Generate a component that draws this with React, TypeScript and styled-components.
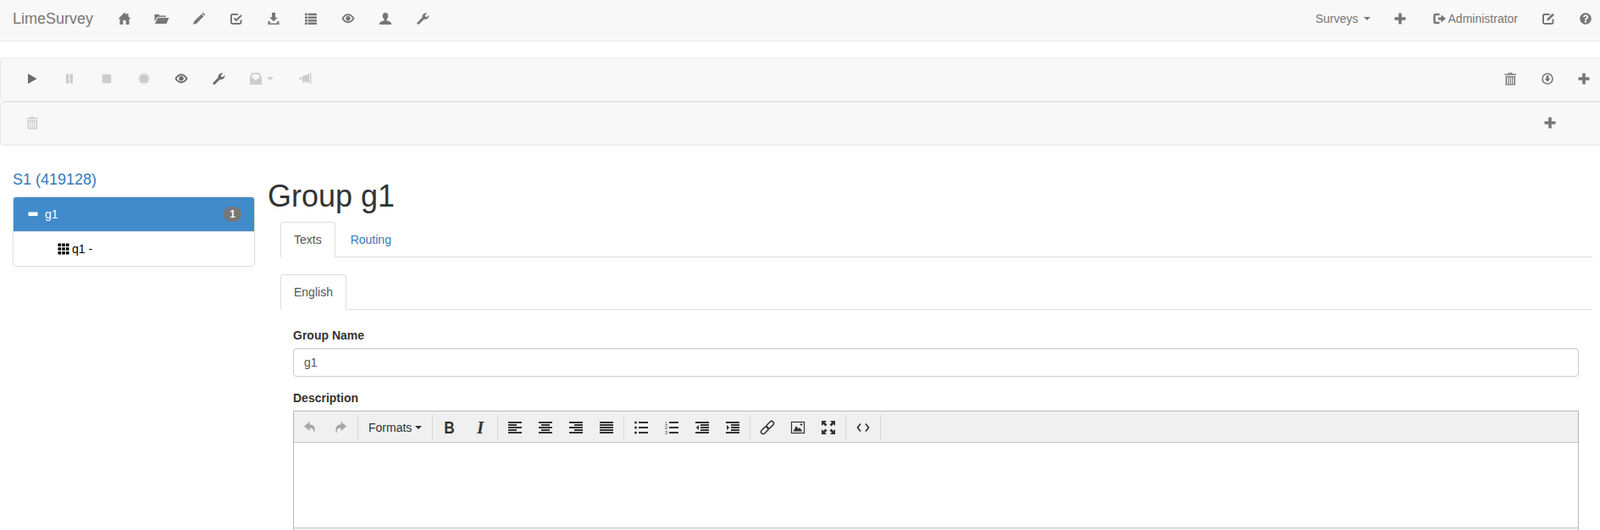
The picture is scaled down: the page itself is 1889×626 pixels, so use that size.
import type { ReactNode } from 'react';
import styled, { createGlobalStyle } from 'styled-components';
import { FaQuestionCircle } from 'react-icons/fa';

const GlobalStyle = createGlobalStyle`
  html, body {
    margin: 0;
    padding: 0;
    background: #fff;
    overflow: hidden;
  }
  body {
    font-family: "Liberation Sans", Arial, sans-serif;
    font-size: 14px;
    line-height: 20px;
    color: #333;
  }
  * {
    box-sizing: border-box;
  }
`;

const burstPoints = Array.from({ length: 20 }, (_, i) => {
  const r = i % 2 === 0 ? 7.4 : 4.8;
  const a = (i / 20) * Math.PI * 2;
  return `${(8 + r * Math.cos(a)).toFixed(2)},${(8 + r * Math.sin(a)).toFixed(2)}`;
}).join(' ');

const stroke = (width: number) => ({
  fill: 'none',
  stroke: 'currentColor',
  strokeWidth: width,
});

// Glyphs are drawn on a 16x16 grid, so one unit is one pixel on the page
const glyphs: Record<string, ReactNode> = {
  home: <path d="M8 .8l2.600 2.600V1.900h2v3.500l2.900 2.900h-2V15H9.700v-5H6.300v5H2.500V8.300h-2z" />,
  folder: <path d="M-.5 3h5l1 1.500h7.500V6H3L-.5 11.500zM3.500 7H16.500l-3 7H-.1z" />,
  pencil: <path d="M12.700.8l2.600 2.600-1.200 1.200-2.600-2.600zM10.800 2.700l2.600 2.600-8.300 8.400L1 15l1.300-4z" />,
  check: (
    <>
      <path d="M13.500 9.500v3A1.500 1.500 0 0 1 12 14H3.500A1.500 1.500 0 0 1 2 12.500v-8A1.500 1.500 0 0 1 3.500 3H10" {...stroke(2)} />
      <path d="M5.500 7.500L8 10l6-6" {...stroke(2.200)} />
    </>
  ),
  edit: (
    <>
      <path d="M13.500 8.500v4A1.500 1.500 0 0 1 12 14H3.500A1.500 1.500 0 0 1 2 12.500v-8A1.500 1.500 0 0 1 3.500 3H9.500" {...stroke(2)} />
      <path d="M6 10.500l.6-2.500 6.400-6.200 2 2-6.500 6.200z" />
    </>
  ),
  download: <path d="M6 1h4v5.500h3L8 11.300 3 6.500h3zM1.500 11h2.300v2.400h8.400V11h2.300v4h-13z" />,
  list: (
    <path d="M1 1.800h3v2.500H1zM4.700 1.800H15v2.500H4.700zM1 5.400h3v2.500H1zM4.700 5.400H15v2.500H4.700zM1 9h3v2.500H1zM4.700 9H15v2.500H4.700zM1 12.600h3v2.300H1zM4.700 12.600H15v2.300H4.700z" />
  ),
  eye: (
    <path
      fillRule="evenodd"
      d="M8 2.300c3.800 0 6.700 3.500 7.500 5.500-.8 2-3.700 5.400-7.500 5.400S1.300 9.800.5 7.800C1.300 5.800 4.200 2.300 8 2.300zM8 4.200c-2.400 0-4.600 1.900-5.400 3.600.8 1.700 3 3.500 5.400 3.500s4.600-1.800 5.400-3.500C12.600 6.100 10.400 4.200 8 4.200zM8 5a2.800 2.800 0 1 1-.01 0z"
    />
  ),
  user: (
    <path d="M8 1c2.200 0 3.300 1.700 3.300 3.800 0 1.800-.9 3.200-1.800 4v1.500c2.500.7 5 1.500 5.500 3V15H1v-1.700c.5-1.500 3-2.300 5.500-3V8.800c-.9-.8-1.800-2.200-1.800-4C4.700 2.700 5.800 1 8 1z" />
  ),
  wrench: (
    <path d="M1 13.200l6.600-6.600C7 4 9.500.8 13.500 1.300L10.800 4l.5 1.800 1.700.4 2.400-2.700c.5 4-2.900 6-5.600 5.300L3 15.300z" />
  ),
  play: <path d="M3 2l10.500 6L3 14z" />,
  pause: <path d="M4 2.500h3.400v11H4zM8.600 2.500H12v11H8.600z" />,
  stop: <path d="M2.800 2.700h10.400v10.500H2.800z" />,
  certificate: <polygon points={burstPoints} />,
  inbox: (
    <path
      fillRule="evenodd"
      d="M3.500 1h9L15 6.500V15H1V6.500zM4.500 2.800L3.200 7.500h2.600l1 2h2.400l1-2h2.600l-1.300-4.700z"
    />
  ),
  bullhorn: <path d="M5 5.200L13 2v11L5 10.300zM14 1h1.400v13H14zM1.500 6.500h2.700v2.600H1.500zM5 10.800h2.200l.6 2.200H5.800z" />,
  trash: (
    <path
      fillRule="evenodd"
      d="M6 .8h4l.5 1.500H15v1.500H1.500V2.300h4zM7 1.800l-.2.5h2.400l-.2-.5zM2.500 5H14v10.500H2.500zM4 6.300v7.900h1.300V6.300zM6.400 6.300v7.900h1.300V6.300zM8.800 6.300v7.900h1.300V6.300zM11.200 6.300v7.900h1.300V6.300z"
    />
  ),
  circleDown: (
    <>
      <circle cx="8" cy="8" r="6" {...stroke(1.600)} />
      <path d="M6.600 4.300h2.800v3.500h2L8 11.700 4.600 7.800h2z" />
    </>
  ),
  plus: <path d="M6.200 1.500h3.600v4.700h4.700v3.600H9.800v4.700H6.200V9.800H1.500V6.200h4.700z" />,
  logout: (
    <>
      <path d="M7.500 3H3A1.500 1.500 0 0 0 1.500 4.500v7A1.500 1.500 0 0 0 3 13h4.500" {...stroke(2.400)} />
      <path d="M6 6.500h3.500V3.500L15 8l-5.500 4.500v-3H6z" />
    </>
  ),
  minus: <path d="M2.500 5.500h11v4.500h-11z" />,
  th: (
    <path d="M1.500 1.500h3.600v3.600H1.500zM6.200 1.500h3.600v3.600H6.200zM10.900 1.500h3.600v3.600h-3.600zM1.500 6.200h3.600v3.600H1.500zM6.200 6.200h3.600v3.600H6.200zM10.900 6.200h3.600v3.600h-3.600zM1.500 10.900h3.600v3.600H1.500zM6.200 10.900h3.600v3.600H6.200zM10.900 10.900h3.600v3.600h-3.600z" />
  ),
  undo: <path d="M7.500 1L1 6.500 7.500 12V8.500c2.800 0 4.300 1 4.700 3.500l.3 3c2.300-5 1.500-10.500-5-10.500z" />,
  redo: <path d="M8.500 1L15 6.500 8.500 12V8.500c-2.800 0-4.300 1-4.700 3.500l-.3 3C1.200 10 2 4.500 8.500 4.500z" />,
  alignLeft: <path d="M0 1h16v2H0zM0 4h10v2H0zM0 7h16v2H0zM0 10h10v2H0zM0 13h16v2H0z" />,
  alignCenter: <path d="M0 1h16v2H0zM3 4h10v2H3zM0 7h16v2H0zM3 10h10v2H3zM0 13h16v2H0z" />,
  alignRight: <path d="M0 1h16v2H0zM6 4h10v2H6zM0 7h16v2H0zM6 10h10v2H6zM0 13h16v2H0z" />,
  alignJustify: <path d="M0 1h16v2H0zM0 4h16v2H0zM0 7h16v2H0zM0 10h16v2H0zM0 13h16v2H0z" />,
  bullist: (
    <>
      <circle cx="1.500" cy="2" r="1.500" />
      <circle cx="1.500" cy="8" r="1.500" />
      <circle cx="1.500" cy="14" r="1.500" />
      <path d="M5 1h11v2H5zM5 7h11v2H5zM5 13h11v2H5z" />
    </>
  ),
  numlist: (
    <>
      <text x="0" y="4.500" fontSize="5.500" fontFamily="Liberation Sans">1</text>
      <text x="0" y="10" fontSize="5.500" fontFamily="Liberation Sans">2</text>
      <text x="0" y="15.500" fontSize="5.500" fontFamily="Liberation Sans">3</text>
      <path d="M5 1h11v2H5zM5 7h11v2H5zM5 13h11v2H5z" />
    </>
  ),
  outdent: <path d="M0 1h16v2H0zM6 4h10v2H6zM6 7h10v2H6zM6 10h10v2H6zM0 13h16v2H0zM4 5v6L.8 8z" />,
  indent: <path d="M0 1h16v2H0zM6 4h10v2H6zM6 7h10v2H6zM6 10h10v2H6zM0 13h16v2H0zM1 5v6l3.200-3z" />,
  link: (
    <g transform="rotate(-45 8 8)">
      <rect x="-1.500" y="5.500" width="10" height="5" rx="2.500" {...stroke(1.500)} />
      <rect x="7.500" y="5.500" width="10" height="5" rx="2.500" {...stroke(1.500)} />
    </g>
  ),
  image: (
    <>
      <rect x="0.500" y="1.500" width="15" height="13" {...stroke(1.200)} />
      <path d="M2.500 12.500l3.500-6.500 2.500 3.500 1.500-1.500 3.500 4.500z" />
      <circle cx="12" cy="4.500" r="1.200" />
    </>
  ),
  fullscreen: (
    <path d="M0 0h6L4 2l2.500 2.500-2 2L2 4 0 6zM16 0v6l-2-2-2.500 2.500-2-2L12 2l-2-2zM0 16v-6l2 2 2.500-2.500 2 2L4 14l2 2zM16 16h-6l2-2-2.500-2.500 2-2L14 12l2-2z" />
  ),
  code: <path d="M5 3.500L1.500 8 5 12.500M11 3.500L14.500 8 11 12.500" {...stroke(1.700)} />,
};

type IconName = keyof typeof glyphs;

function Glyph({ name }: { name: IconName }) {
  return (
    <IconSvg viewBox="0 0 16 16" width={16} height={16} fill="currentColor">
      {glyphs[name]}
    </IconSvg>
  );
}

const leftNav: IconName[] = ['home', 'folder', 'pencil', 'check', 'download', 'list', 'eye', 'user', 'wrench'];

const editorGroups: IconName[][] = [
  ['alignLeft', 'alignCenter', 'alignRight', 'alignJustify'],
  ['bullist', 'numlist', 'outdent', 'indent'],
  ['link', 'image', 'fullscreen'],
  ['code'],
];

export default function App() {
  return (
    <Page>
      <GlobalStyle />
      <Navbar>
        <Brand>LimeSurvey</Brand>
        {leftNav.map((name) => (
          <NavIcon key={name}>
            <Glyph name={name} />
          </NavIcon>
        ))}
        <NavRight>
          <NavText>
            Surveys
            <Caret />
          </NavText>
          <NavIconRight>
            <Glyph name="plus" />
          </NavIconRight>
          <NavUser>
            <Glyph name="logout" />
            Administrator
          </NavUser>
          <NavIconRight>
            <Glyph name="edit" />
          </NavIconRight>
          <NavHelp>
            <FaQuestionCircle size={14} />
          </NavHelp>
        </NavRight>
      </Navbar>

      <Toolbars>
        <ActionBar>
          <ActionButton>
            <Glyph name="play" />
          </ActionButton>
          <ActionButton $off>
            <Glyph name="pause" />
          </ActionButton>
          <ActionButton $off>
            <Glyph name="stop" />
          </ActionButton>
          <ActionButton $off>
            <Glyph name="certificate" />
          </ActionButton>
          <ActionButton>
            <Glyph name="eye" />
          </ActionButton>
          <ActionButton>
            <Glyph name="wrench" />
          </ActionButton>
          <ActionDropdown>
            <Glyph name="inbox" />
            <Caret />
          </ActionDropdown>
          <ActionButton $off>
            <Glyph name="bullhorn" />
          </ActionButton>
          <ActionRight>
            <ActionButtonRight>
              <Glyph name="trash" />
            </ActionButtonRight>
            <ActionButtonRight>
              <Glyph name="circleDown" />
            </ActionButtonRight>
            <ActionButtonRight>
              <Glyph name="plus" />
            </ActionButtonRight>
          </ActionRight>
        </ActionBar>
        <ActionBar>
          <ActionButton $off>
            <Glyph name="trash" />
          </ActionButton>
          <ActionRight $inset>
            <ActionButtonRight>
              <Glyph name="plus" />
            </ActionButtonRight>
          </ActionRight>
        </ActionBar>
      </Toolbars>

      <Main>
        <Sidebar>
          <SurveyTitle>S1 (419128)</SurveyTitle>
          <GroupList>
            <GroupRow>
              <Glyph name="minus" />
              <GroupName>g1</GroupName>
              <Badge>1</Badge>
            </GroupRow>
            <QuestionRow>
              <Glyph name="th" />
              q1 -
            </QuestionRow>
          </GroupList>
        </Sidebar>

        <Content>
          <Heading>Group g1</Heading>
          <TabPane>
            <Tabs>
              <Tab $active>Texts</Tab>
              <Tab>Routing</Tab>
            </Tabs>
            <LanguageTabs>
              <Tab $active>English</Tab>
            </LanguageTabs>
            <Form>
              <FieldLabel>Group Name</FieldLabel>
              <TextInput readOnly value="g1" />
              <FieldLabel>Description</FieldLabel>
              <Editor>
                <EditorToolbar>
                  <EditorGroup>
                    <EditorButton $muted>
                      <Glyph name="undo" />
                    </EditorButton>
                    <EditorButton $muted>
                      <Glyph name="redo" />
                    </EditorButton>
                  </EditorGroup>
                  <EditorGroup>
                    <FormatsButton>
                      Formats
                      <Caret />
                    </FormatsButton>
                  </EditorGroup>
                  <EditorGroup>
                    <EditorButton>
                      <BoldMark>B</BoldMark>
                    </EditorButton>
                    <EditorButton>
                      <ItalicMark>I</ItalicMark>
                    </EditorButton>
                  </EditorGroup>
                  {editorGroups.map((group) => (
                    <EditorGroup key={group[0]}>
                      {group.map((name) => (
                        <EditorButton key={name}>
                          <Glyph name={name} />
                        </EditorButton>
                      ))}
                    </EditorGroup>
                  ))}
                </EditorToolbar>
                <EditorBody />
                <EditorStatus />
              </Editor>
            </Form>
          </TabPane>
        </Content>
      </Main>
    </Page>
  );
}

const Page = styled.div`
  height: 626px;
  overflow: hidden;
`;

const IconSvg = styled.svg`
  display: block;
  flex: none;
  overflow: visible;
`;

const Caret = styled.span`
  display: inline-block;
  flex: none;
  width: 0;
  height: 0;
  margin-left: 6px;
  border-top: 4px solid currentColor;
  border-left: 4px solid transparent;
  border-right: 4px solid transparent;
`;

const Navbar = styled.nav`
  display: flex;
  align-items: center;
  height: 49px;
  padding-bottom: 4px;
  background: #f8f8f8;
  border-bottom: 1px solid #e7e7e7;
  color: #777;
`;

const Brand = styled.div`
  width: 125px;
  padding-left: 15px;
  font-size: 18px;
  line-height: 20px;
`;

const NavIcon = styled.div`
  display: flex;
  justify-content: center;
  width: 44px;
`;

const NavRight = styled.div`
  display: flex;
  align-items: center;
  margin-left: auto;
`;

const NavText = styled.div`
  display: flex;
  align-items: center;
  padding: 0 15px;
`;

const NavIconRight = styled.div`
  display: flex;
  justify-content: center;
  width: 41px;
`;

const NavUser = styled.div`
  display: flex;
  align-items: center;
  gap: 2px;
  padding: 0 15px 0 18px;
`;

const NavHelp = styled.div`
  display: flex;
  width: 41px;
  padding-left: 17px;
`;

const Toolbars = styled.div`
  margin: 19px -5px 0 0;
`;

const ActionBar = styled.div`
  display: flex;
  align-items: center;
  height: 52px;
  padding: 0 1px 2px 15px;
  background: #f8f8f8;
  border: 1px solid #e7e7e7;
  border-radius: 4px;
`;

const ActionButton = styled.div<{ $off?: boolean }>`
  display: flex;
  justify-content: center;
  width: 44px;
  color: ${(p) => (p.$off ? '#ccc' : '#6b6b6b')};
`;

const ActionDropdown = styled.div`
  display: flex;
  align-items: center;
  width: 58px;
  padding-left: 14px;
  color: #ccc;

  ${Caret} {
    margin-left: 5px;
  }
`;

const ActionRight = styled.div<{ $inset?: boolean }>`
  display: flex;
  margin-left: auto;
  padding-right: ${(p) => (p.$inset ? '40px' : '0')};
`;

const ActionButtonRight = styled.div`
  display: flex;
  justify-content: center;
  width: 43.5px;
  color: #777;
`;

const Main = styled.div`
  display: flex;
  align-items: flex-start;
`;

const Sidebar = styled.aside`
  flex: none;
  width: 286px;
  margin: 29px 15px 0 15px;
`;

const SurveyTitle = styled.div`
  margin-bottom: 9px;
  font-size: 18px;
  line-height: 22px;
  color: #337ab7;
`;

const GroupList = styled.div`
  background: #fff;
  border: 1px solid #ddd;
  border-radius: 4px;
  overflow: hidden;
`;

const GroupRow = styled.div`
  display: flex;
  align-items: center;
  height: 41px;
  padding: 0 15px 1px 15px;
  background: #428bca;
  border-bottom: 1px solid #ddd;
  color: #fff;
`;

const GroupName = styled.span`
  margin-left: 6px;
`;

const Badge = styled.span`
  margin-left: auto;
  min-width: 10px;
  padding: 3px 7px;
  background: #777;
  border-radius: 10px;
  font-size: 12px;
  font-weight: bold;
  line-height: 12px;
`;

const QuestionRow = styled.div`
  display: flex;
  align-items: center;
  gap: 2px;
  height: 40px;
  padding-left: 51px;
  color: #000;
`;

const Content = styled.main`
  flex: 1;
  min-width: 0;
  padding-right: 9px;
`;

const Heading = styled.h1`
  margin: 40px 0 10px;
  font-size: 36px;
  font-weight: 500;
  line-height: 40px;
`;

const TabPane = styled.div`
  margin-left: 15px;
`;

const Tabs = styled.div`
  display: flex;
  height: 42px;
  border-bottom: 1px solid #ddd;
`;

const LanguageTabs = styled(Tabs)`
  margin-top: 20px;
`;

const Tab = styled.div<{ $active?: boolean }>`
  height: 42px;
  margin-right: 2px;
  padding: 10px 15px;
  background: ${(p) => (p.$active ? '#fff' : 'transparent')};
  border: 1px solid ${(p) => (p.$active ? '#ddd' : 'transparent')};
  border-bottom-color: ${(p) => (p.$active ? '#fff' : 'transparent')};
  border-radius: 4px 4px 0 0;
  color: ${(p) => (p.$active ? '#555' : '#337ab7')};
`;

const Form = styled.div`
  padding: 20px 16px 0 15px;
`;

const FieldLabel = styled.div`
  margin-bottom: 5px;
  font-weight: bold;
`;

const TextInput = styled.input`
  display: block;
  width: 100%;
  height: 34px;
  margin-bottom: 15px;
  padding: 6px 12px;
  background: #fff;
  border: 1px solid #ccc;
  border-radius: 4px;
  box-shadow: inset 0 1px 1px rgba(0, 0, 0, 0.075);
  color: #555;
  font: 14px/20px "Liberation Sans", Arial, sans-serif;
`;

const Editor = styled.div`
  border: 1px solid #b9b9b9;
`;

const EditorToolbar = styled.div`
  display: flex;
  height: 37px;
  padding-top: 4px;
  background: #f0f0f0;
  border-bottom: 1px solid #c5c5c5;
`;

const EditorGroup = styled.div`
  display: flex;
  height: 30px;
  padding: 0 2px;
  border-right: 1px solid #d9d9d9;

  &:first-child {
    padding-left: 1px;
  }
`;

const EditorButton = styled.div<{ $muted?: boolean }>`
  display: flex;
  align-items: center;
  justify-content: center;
  width: 36px;
  color: ${(p) => (p.$muted ? '#a6a6a6' : '#333')};
`;

const FormatsButton = styled.div`
  display: flex;
  align-items: center;
  width: 83px;
  padding-left: 10px;
  color: #333;

  ${Caret} {
    margin-left: 4px;
  }
`;

const BoldMark = styled.span`
  font-size: 21px;
  font-weight: bold;
  transform: scaleX(0.82);
`;

const ItalicMark = styled.span`
  font-family: "Liberation Serif", serif;
  font-size: 21px;
  font-style: italic;
  font-weight: bold;
`;

const EditorBody = styled.div`
  height: 101px;
  background: #fff;
  border-bottom: 1px solid #c5c5c5;
`;

const EditorStatus = styled.div`
  height: 30px;
  background: #f0f0f0;
`;
